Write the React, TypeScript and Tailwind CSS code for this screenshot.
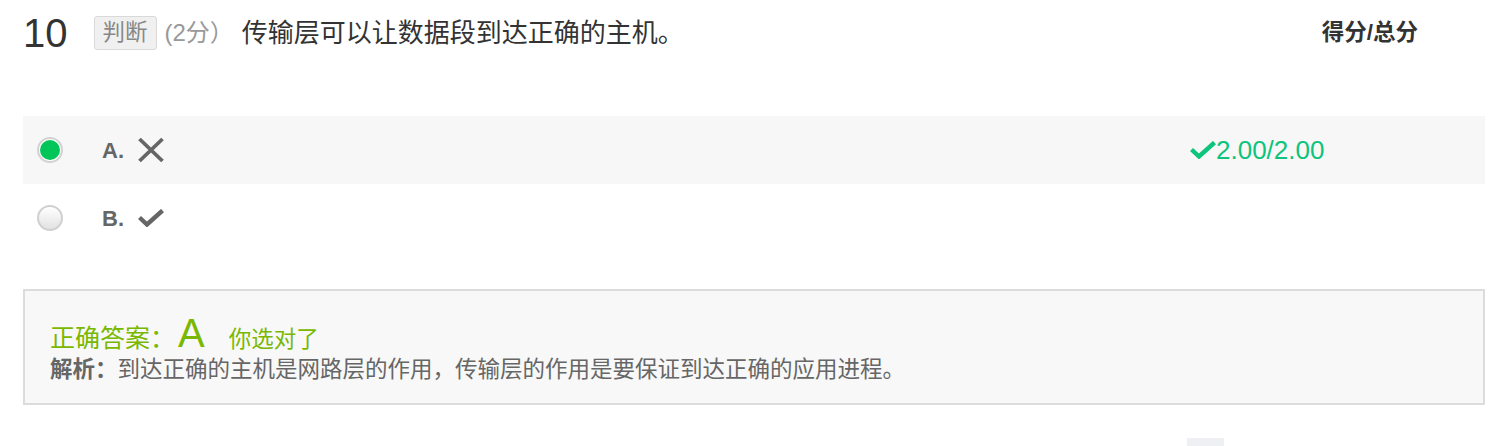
import React from "react";

const font = "font-['Liberation_Sans','Noto_Sans_CJK_SC',sans-serif]";

function CrossIcon() {
    return (
        <svg width="28" height="26" viewBox="0 0 28 26" aria-hidden="true">
            <path d="M2.5 2L25.5 24M25.5 2L2.5 24" stroke="#666" strokeWidth="3.8" fill="none" />
        </svg>
    );
}

function CheckIcon({ color = "#666", className }: { color?: string; className?: string }) {
    return (
        <svg width="26" height="18" viewBox="0 0 26 18" className={className} aria-hidden="true">
            <path d="M1.5 8.5L9 15.5L24.5 1.5" stroke={color} strokeWidth="4.4" fill="none" />
        </svg>
    );
}

export default function App() {
    return (
        <div className={`${font} min-h-[446px] bg-white pl-[23px] pr-[13px]`}>
            {/* Question header */}
            <div className="flex items-center pt-[13px]">
                <span className="h-[40px] text-[40px] leading-[40px] text-[#333]">10</span>
                <span className="ml-[26px] flex h-[34px] items-center rounded-[3px] border border-[#d9d9d9] bg-[#f0f0f0] px-[8px] text-[22.5px] text-[#888]">
                    判断
                </span>
                <span className="ml-[8px] text-[24px] text-[#999]">(2分）</span>
                <span className="ml-[8px] text-[26px] text-[#333]">传输层可以让数据段到达正确的主机。</span>
                <span className="ml-auto mr-[67px] text-[22.5px] font-bold text-[#333]">得分/总分</span>
            </div>

            {/* Options */}
            <div className="mt-[63px]">
                <div className="flex h-[68px] items-center bg-[#f7f7f7]">
                    <span className="ml-[14px] flex h-[26px] w-[26px] items-center justify-center rounded-full border-2 border-[#d2d2d2] bg-white">
                        <span className="h-[20px] w-[20px] rounded-full bg-[#00c65a]" />
                    </span>
                    <span className="ml-[39px] text-[22px] font-bold text-[#666]">A.</span>
                    <span className="ml-[13px] flex">
                        <CrossIcon />
                    </span>
                    <span className="ml-auto flex w-[295px] items-center text-[26px] text-[#0cc47c]">
                        <CheckIcon color="#0cc47c" />
                        <span>2.00/2.00</span>
                    </span>
                </div>
                <div className="flex h-[68px] items-center">
                    <span className="ml-[14px] h-[26px] w-[26px] rounded-full border-2 border-[#d0d0d0] bg-linear-to-b from-white to-[#e2e2e2]" />
                    <span className="ml-[39px] text-[22px] font-bold text-[#666]">B.</span>
                    <span className="ml-[14px] flex">
                        <CheckIcon />
                    </span>
                </div>
            </div>

            {/* Answer box */}
            <div className="mt-[37px] border-2 border-[#dcdcdc] bg-[#f8f8f8] pt-[20px] pb-[18px] pl-[25px]">
                <div className="flex h-[44px] items-baseline text-[#7ab800]">
                    <span className="text-[25px]">正确答案：</span>
                    <span className="ml-[3px] text-[40px] leading-[44px]">A</span>
                    <span className="ml-[24px] text-[22.5px]">你选对了</span>
                </div>
                <div className="text-[22.5px] leading-[30px] text-[#666]">
                    <span className="font-bold">解析：</span>
                    <span>到达正确的主机是网路层的作用，传输层的作用是要保证到达正确的应用进程。</span>
                </div>
            </div>

            <div className="ml-[1164px] mt-[33px] h-[8px] w-[37px] bg-[#eef0f4]" />
        </div>
    );
}
